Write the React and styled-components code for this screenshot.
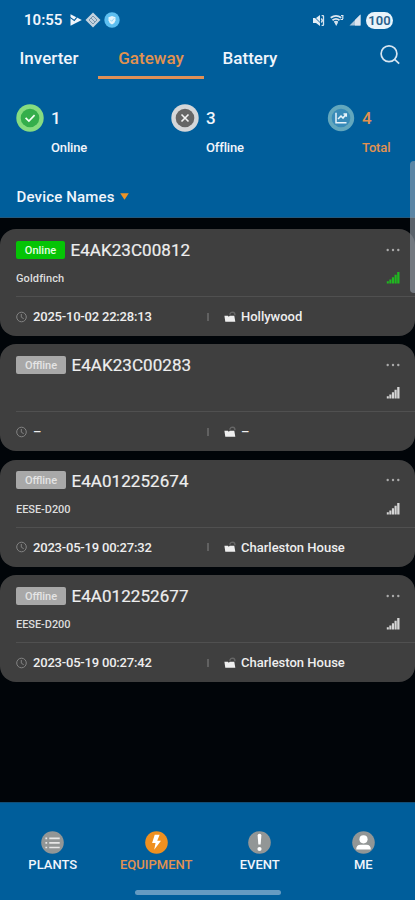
import React from "react";
import styled, { createGlobalStyle } from "styled-components";

const BLUE = "#005e9b";
const ORANGE = "#e2924f";

const GlobalStyle = createGlobalStyle`
  * { box-sizing: border-box; }
  body { margin: 0; background: #010509; font-family: Roboto, "Liberation Sans", sans-serif; }
  svg { display: block; flex: none; }
`;

const Screen = styled.div`
  position: relative;
  width: 415px;
  height: 900px;
  display: flex;
  flex-direction: column;
  overflow: hidden;
  background: #010509;
  color: #f1f5fb;
`;

const Header = styled.header`
  height: 218px;
  flex: none;
  background: ${BLUE};
  border-bottom: 1px solid #23587c;
`;

const StatusBar = styled.div`
  height: 40px;
  padding: 0 22px 0 24px;
  display: flex;
  align-items: center;
  justify-content: space-between;
`;

const StatusGroup = styled.div`
  display: flex;
  align-items: center;
  gap: ${(p) => p.$gap}px;
`;

const Clock = styled.span`
  width: 39px;
  margin-right: 4px;
  font-size: 15px;
  font-weight: 600;
  line-height: 20px;
  white-space: nowrap;
`;

const BatteryPill = styled.span`
  width: 27px;
  height: 17px;
  border-radius: 9px;
  background: #e9f4fb;
  color: #29628c;
  font-size: 13px;
  font-weight: 600;
  line-height: 17px;
  text-align: center;
`;

const TabBar = styled.nav`
  height: 39px;
  display: flex;
  align-items: stretch;
  padding-right: 14px;
`;

const Tab = styled.div`
  width: ${(p) => p.$width}px;
  display: flex;
  justify-content: center;
  padding-top: 6px;
  font-size: 17px;
  font-weight: 500;
  line-height: 24px;
  letter-spacing: ${(p) => p.$spacing || 0}px;
  color: ${(p) => (p.$active ? ORANGE : "#f1f5fb")};
  border-bottom: 3px solid ${(p) => (p.$active ? "#df9057" : "transparent")};
`;

const SearchButton = styled.div`
  margin-left: auto;
  padding-top: 4px;
`;

const Stats = styled.div`
  height: 97px;
  padding: 25px 0 0 16px;
  display: flex;
`;

const Stat = styled.div`
  width: ${(p) => p.$width}px;
  display: grid;
  grid-template-columns: 28px 1fr;
  grid-template-rows: 28px 31px;
  column-gap: 7px;
  align-items: center;
  align-content: start;
  color: ${(p) => (p.$accent ? ORANGE : "#f1f5fb")};
`;

const StatCount = styled.span`
  font-size: 17px;
  font-weight: 500;
  line-height: 28px;
`;

const StatLabel = styled.span`
  grid-column: 2;
  font-size: 13px;
  font-weight: 500;
  line-height: 20px;
  letter-spacing: -0.15px;
`;

const SortRow = styled.div`
  height: 40px;
  padding: 2px 0 0 16.5px;
  display: flex;
  align-items: center;
  gap: 5px;
  font-size: 15px;
  font-weight: 500;
`;

const SortText = styled.span`
  letter-spacing: 0.17px;
`;

const DeviceList = styled.main`
  flex: 1;
  padding-top: 11px;
  display: flex;
  flex-direction: column;
  gap: 8.4px;
`;

const Card = styled.article`
  height: 107px;
  flex: none;
  border-radius: 16px;
  background: #3f3f3f;
  color: #eeeeee;
`;

const CardTop = styled.div`
  height: 68px;
  margin-left: 16px;
  padding-right: 15px;
  border-bottom: 1px solid #505050;
`;

const TitleRow = styled.div`
  height: 41px;
  display: flex;
  align-items: center;
`;

const StatusTag = styled.span`
  width: ${(p) => (p.$online ? 49 : 50)}px;
  height: 18px;
  margin-right: 5.5px;
  border-radius: 2px;
  background: ${(p) => (p.$online ? "#05c405" : "#a8a8a8")};
  color: ${(p) => (p.$online ? "#e3ffe0" : "#e4e4e4")};
  font-size: 11px;
  font-weight: 500;
  line-height: 19px;
  text-align: center;
`;

const Serial = styled.span`
  font-size: 17px;
  font-weight: 400;
  line-height: 20px;
  letter-spacing: 0.06px;
  padding-top: 1px;
  -webkit-text-stroke: 0.2px;
`;

const MoreButton = styled.span`
  margin-left: auto;
`;

const ModelRow = styled.div`
  height: 16px;
  display: flex;
  align-items: center;
  justify-content: space-between;
`;

const Model = styled.span`
  padding-top: 2px;
  font-size: 11px;
  font-weight: 500;
  line-height: 16px;
  color: #dddddd;
  letter-spacing: ${(p) => p.$spacing}px;
`;

const CardBottom = styled.div`
  height: 39px;
  padding-left: 16px;
  display: flex;
  align-items: center;
  font-size: 13px;
  font-weight: 500;
`;

const Updated = styled.div`
  width: 191px;
  display: flex;
  align-items: center;
  gap: 6px;
  letter-spacing: -0.2px;
`;

const Separator = styled.span`
  width: 2px;
  height: 8px;
  margin-right: 15px;
  background: #616161;
`;

const Site = styled.div`
  display: flex;
  align-items: center;
  gap: 5px;
`;

const BottomNav = styled.footer`
  height: 98px;
  flex: none;
  background: ${BLUE};
  border-top: 1px solid #124d74;
  display: flex;
  flex-direction: column;
  align-items: center;
`;

const NavItems = styled.div`
  width: 100%;
  height: 87px;
  padding: 28px 0 0 1px;
  display: grid;
  grid-template-columns: repeat(4, 1fr);
`;

const NavItem = styled.div`
  display: flex;
  flex-direction: column;
  align-items: center;
  gap: 3px;
  font-size: 13px;
  font-weight: 500;
  line-height: 16px;
  color: ${(p) => (p.$active ? ORANGE : "#f1f5fb")};
`;

const HomeHandle = styled.div`
  width: 146px;
  height: 5px;
  border-radius: 3px;
  background: #659bc2;
`;

const ScrollThumb = styled.div`
  position: absolute;
  top: 161px;
  right: 0;
  width: 5px;
  height: 132px;
  border-radius: 4px 0 0 4px;
  background: rgba(150, 160, 172, 0.6);
`;

const PlayIcon = () => (
  <svg width="12" height="14" viewBox="0 0 12 14">
    <path d="M.5 1.2 11.8 7 .5 12.8Z" fill="#f1f5fb" />
    <path d="M0 4.4 4.3 7.4 6.8 4.4" fill="none" stroke={BLUE} strokeWidth="1.1" />
  </svg>
);

const DiamondIcon = () => (
  <svg width="16" height="16" viewBox="0 0 16 16">
    <path d="M8 .5 15.5 8 8 15.5.5 8Z" fill="#c3d3df" />
    <path d="m4 8 4-4 4 4-4 4ZM6 6l4 4M8 4l-4 4m8 0-4 4" fill="none" stroke="#7795ad" strokeWidth="1" />
  </svg>
);

const ShieldIcon = () => (
  <svg width="16" height="16" viewBox="0 0 16 16">
    <circle cx="8" cy="8" r="7.7" fill="#5dbff0" />
    <path d="M8 4 11.5 5.2v3Q11.2 11 8 12.4 4.8 11 4.5 8.2v-3Z" fill="#e5f5fb" />
    <path d="m6.2 7.8 1.5 1.5 2.5-3" fill="none" stroke="#9cd7f0" strokeWidth="1" />
  </svg>
);

const MuteIcon = () => (
  <svg width="13" height="13" viewBox="0 0 13 13">
    <path d="M1 4h3l4-3v11L4 9H1Z" fill="#e3edf5" />
    <path d="M9.2 4.5q2 2 0 4M9.6 1.7h2.2m-2.2 9.6h2.2M11.5 2v9" fill="none" stroke="#d5e3ee" strokeWidth="1.3" />
    <path d="m1 1.5 8 8" stroke={BLUE} strokeWidth=".9" />
  </svg>
);

const WifiIcon = () => (
  <svg width="14" height="13" viewBox="0 0 14 13">
    <path d="M.7 3.8Q6 .1 11.3 3.8M2.5 6.2Q6 3.6 9.5 6.2M4.3 8.3Q6 7 7.7 8.3" fill="none" stroke="#dce7f0" strokeWidth="1.8" />
    <path d="m4.3 8.3 1.9 3.7 2-3.7Z" fill="#dce7f0" />
    <path d="M11 1.5h2.5M12.8 1.5v3.5M10.5 5.5h2.5" stroke="#dce7f0" strokeWidth="1.2" />
  </svg>
);

const CellIcon = () => (
  <svg width="12" height="12" viewBox="0 0 12 12">
    <path d="M.5 11.5 11.5.5v11Z" fill="#a9c4da" />
    <path d="M6 6 11.5.5v11H6Z" fill="#dce5ef" />
  </svg>
);

const SearchIcon = () => (
  <svg width="22" height="22" viewBox="0 0 22 22" fill="none" stroke="#d6e5f1" strokeWidth="1.7">
    <circle cx="10" cy="9.8" r="7.9" />
    <path d="m15.6 15.4 4.6 4.3" />
  </svg>
);

const OnlineIcon = () => (
  <svg width="28" height="28" viewBox="0 0 28 28">
    <circle cx="14" cy="14" r="13.7" fill="#86dc80" />
    <circle cx="14" cy="14" r="9.3" fill="#34ae4b" />
    <path d="m9.6 13.8 3.3 3.3 5.7-5.9" fill="none" stroke="#f5fff5" strokeWidth="1.7" />
  </svg>
);

const OfflineIcon = () => (
  <svg width="28" height="28" viewBox="0 0 28 28">
    <circle cx="14" cy="14" r="13.7" fill="#d5d7d9" />
    <circle cx="14" cy="14" r="9.3" fill="#666666" />
    <path d="m10.5 10.5 7 7m0-7-7 7" fill="none" stroke="#f3f3f3" strokeWidth="1.6" />
  </svg>
);

const TotalIcon = () => (
  <svg width="28" height="28" viewBox="0 0 28 28">
    <circle cx="14" cy="14" r="13.2" fill="#62a7bd" />
    <circle cx="14" cy="14" r="9.3" fill="#388bb8" />
    <path d="M9 8.8v10h10.5M11 15l3-3 2 2 3-3.8M16.5 9.9h2.8v2.8" fill="none" stroke="#e9f5fb" strokeWidth="1.5" />
  </svg>
);

const Caret = () => (
  <svg width="9" height="8" viewBox="0 0 9 8">
    <path d="M.2.2h8.6L4.5 6.7Z" fill="#ed9426" />
  </svg>
);

const DotsIcon = () => (
  <svg width="14" height="4" viewBox="0 0 14 4" fill="#ababab">
    <circle cx="1.7" cy="2" r="1.2" />
    <circle cx="7" cy="2" r="1.2" />
    <circle cx="12.3" cy="2" r="1.2" />
  </svg>
);

const SignalIcon = ({ color }) => (
  <svg width="14" height="14" viewBox="0 0 14 14" fill={color}>
    <path d="M.8 10.2h2v2.4h-2ZM3.3 8.6h2.1v4H3.3ZM5.9 6.3H8v6.3H5.9ZM8.5 3.8h2.2v8.8H8.5ZM11.2 1h2.3v11.6h-2.3Z" />
  </svg>
);

const ClockIcon = () => (
  <svg width="11" height="12" viewBox="0 0 11 12" fill="none" stroke="#838383">
    <circle cx="5.5" cy="6" r="4.8" />
    <path d="M5.3 3v3.2l2.4 1.5" />
  </svg>
);

const PlantIcon = () => (
  <svg width="12" height="12" viewBox="0 0 12 12">
    <path d="M.4 4.8h3.4l1 .9 1-.9h4.5l1 6H1.3Z" fill="#eeeeee" />
    <path d="M5.8 3.8Q6 1.2 8.7 1.1q2.3.2 2.3 3.2" fill="none" stroke="#666" strokeWidth="1.4" />
  </svg>
);

const NAV_GLYPHS = {
  plants: (
    <path d="M4.2 7h1.7m2 0h10M4.2 11.4h1.7m2 0h10M4.2 15.8h1.7m2 0h10" stroke="#e7e7e7" strokeWidth="1.6" />
  ),
  equipment: <path d="m9.3 3.5-2.5 8h3.3L8.8 18l6.5-8.7h-3.6l2.3-5.8Z" fill="#fff" />,
  event: (
    <g fill="#fff">
      <path d="M9.2 4.2q0-1.5 1.8-1.5t1.8 1.5l-.7 8.7H9.9Z" />
      <circle cx="11" cy="17.2" r="2" />
    </g>
  ),
  me: (
    <g fill="#fff">
      <circle cx="11" cy="8" r="3.9" />
      <path d="M4 17.8q0-4.7 4.2-4.7h5.6q4.2 0 4.2 4.7Z" />
    </g>
  ),
};

const NavIcon = ({ name, active }) => (
  <svg width="23" height="23" viewBox="0 0 22 22">
    <circle cx="11" cy="11" r="10.8" fill={active ? "#ef9020" : "#929696"} />
    {NAV_GLYPHS[name]}
  </svg>
);

const DEVICES = [
  { id: "E4AK23C00812", online: true, model: "Goldfinch", time: "2025-10-02 22:28:13", site: "Hollywood" },
  { id: "E4AK23C00283", online: false, model: "", time: "–", site: "–" },
  { id: "E4A012252674", online: false, model: "EESE-D200", time: "2023-05-19 00:27:32", site: "Charleston House" },
  { id: "E4A012252677", online: false, model: "EESE-D200", time: "2023-05-19 00:27:42", site: "Charleston House" },
];

const NAV = [
  ["plants", "PLANTS"],
  ["equipment", "EQUIPMENT"],
  ["event", "EVENT"],
  ["me", "ME"],
];

const DeviceCard = ({ device }) => (
  <Card>
    <CardTop>
      <TitleRow>
        <StatusTag $online={device.online}>{device.online ? "Online" : "Offline"}</StatusTag>
        <Serial>{device.id}</Serial>
        <MoreButton><DotsIcon /></MoreButton>
      </TitleRow>
      <ModelRow>
        <Model $spacing={device.online ? 0.1 : -0.05}>{device.model}</Model>
        <SignalIcon color={device.online ? "#20b820" : "#d5d5d5"} />
      </ModelRow>
    </CardTop>
    <CardBottom>
      <Updated><ClockIcon />{device.time}</Updated>
      <Separator />
      <Site><PlantIcon />{device.site}</Site>
    </CardBottom>
  </Card>
);

export default function App() {
  return (
    <>
      <GlobalStyle />
      <Screen>
        <Header>
          <StatusBar>
            <StatusGroup $gap={3}>
              <Clock>10:55</Clock>
              <PlayIcon />
              <DiamondIcon />
              <ShieldIcon />
            </StatusGroup>
            <StatusGroup $gap={5}>
              <MuteIcon />
              <WifiIcon />
              <CellIcon />
              <BatteryPill>100</BatteryPill>
            </StatusGroup>
          </StatusBar>
          <TabBar>
            <Tab $width={98}>Inverter</Tab>
            <Tab $width={106} $active>Gateway</Tab>
            <Tab $width={92}>Battery</Tab>
            <SearchButton><SearchIcon /></SearchButton>
          </TabBar>
          <Stats>
            <Stat $width={155}>
              <OnlineIcon />
              <StatCount>1</StatCount>
              <StatLabel>Online</StatLabel>
            </Stat>
            <Stat $width={156}>
              <OfflineIcon />
              <StatCount>3</StatCount>
              <StatLabel>Offline</StatLabel>
            </Stat>
            <Stat $width={80} $accent>
              <TotalIcon />
              <StatCount>4</StatCount>
              <StatLabel>Total</StatLabel>
            </Stat>
          </Stats>
          <SortRow>
            <SortText>Device Names</SortText>
            <Caret />
          </SortRow>
        </Header>
        <DeviceList>
          {DEVICES.map((d) => <DeviceCard key={d.id} device={d} />)}
        </DeviceList>
        <BottomNav>
          <NavItems>
            {NAV.map(([name, label]) => (
              <NavItem key={name} $active={name === "equipment"}>
                <NavIcon name={name} active={name === "equipment"} />
                {label}
              </NavItem>
            ))}
          </NavItems>
          <HomeHandle />
        </BottomNav>
        <ScrollThumb />
      </Screen>
    </>
  );
}
